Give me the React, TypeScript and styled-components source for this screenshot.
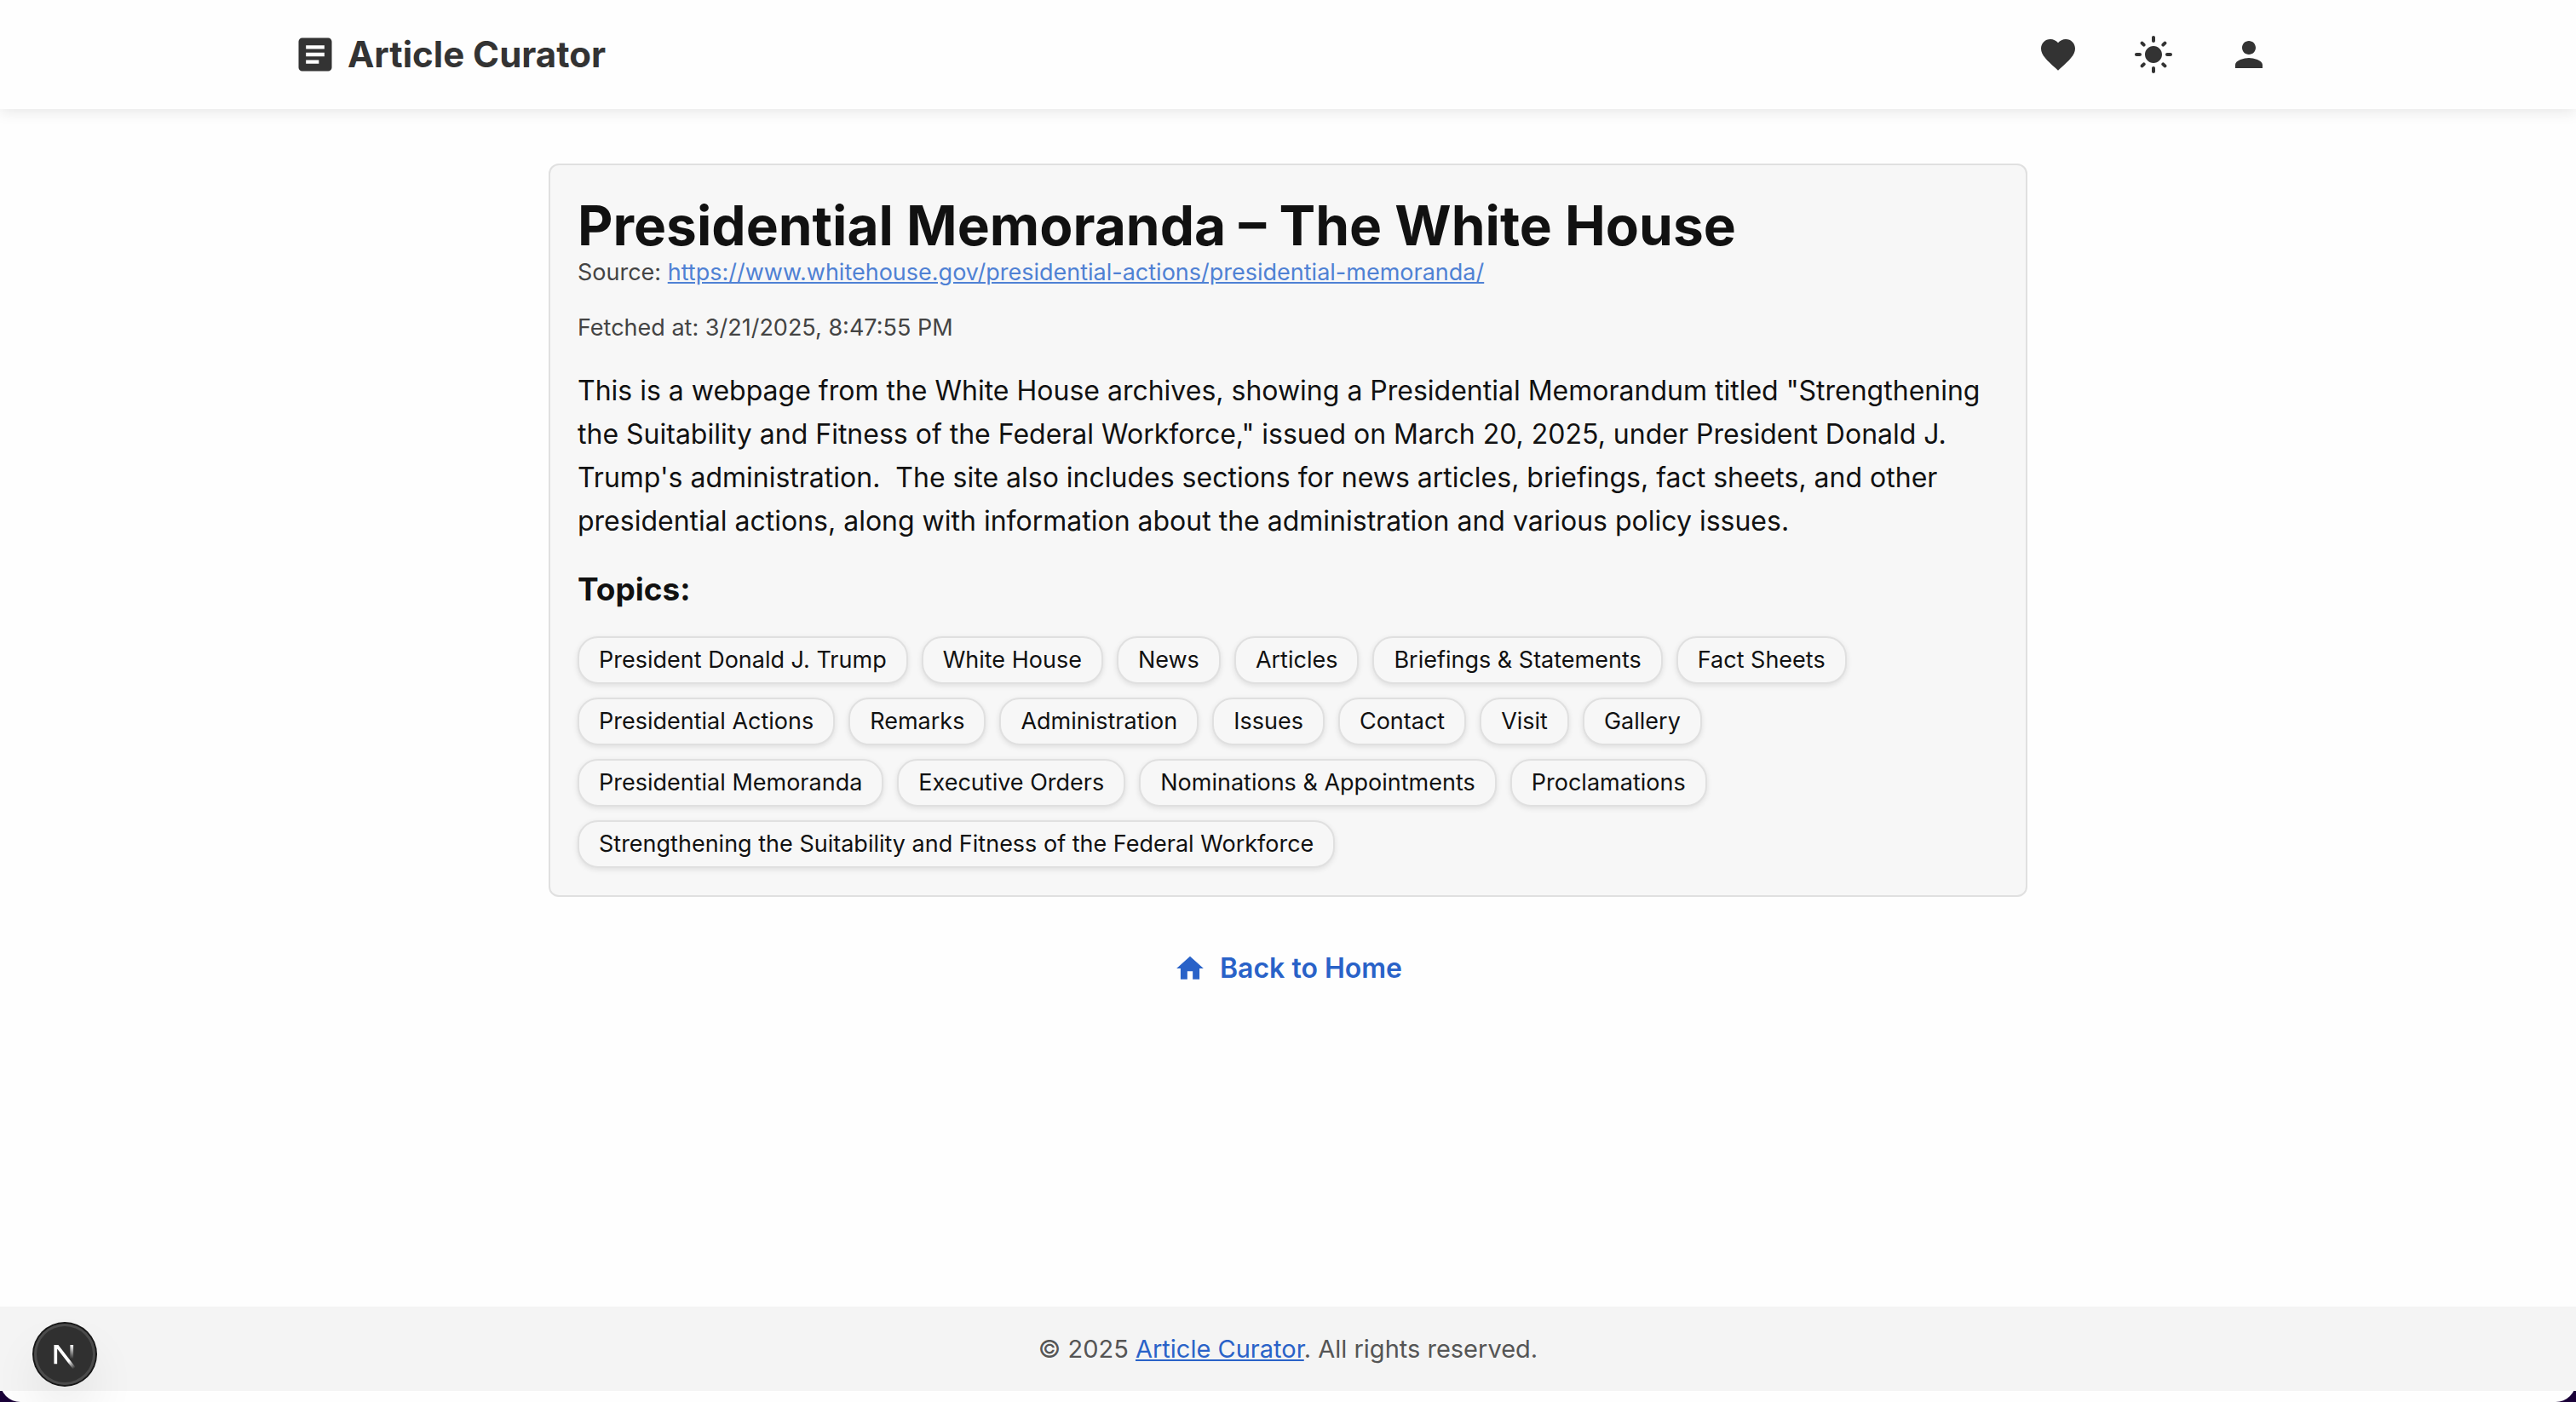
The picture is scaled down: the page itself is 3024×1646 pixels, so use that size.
import React from "react";
import styled, { createGlobalStyle } from "styled-components";
import { MdArticle, MdFavorite, MdHome, MdLightMode, MdPerson } from "react-icons/md";

const GlobalStyle = createGlobalStyle`
  *, *::before, *::after { box-sizing: border-box; }
  body {
    margin: 0;
    background: #1a0138;
    color: #111;
    font-family: Inter, "Liberation Sans", sans-serif;
    font-size: 32px;
    line-height: 1.2;
  }
  h1, h2, p, ul { margin: 0; padding: 0; }
`;

const Page = styled.div`
  display: flex;
  flex-direction: column;
  min-height: 100vh;
  padding-bottom: 13px;
  background: #fefefe;
  border-radius: 0 0 24px 24px;
`;

const Header = styled.header`
  background: #fefefe;
  box-shadow: 0 4px 16px rgba(0, 0, 0, 0.09);
`;

const HeaderInner = styled.div`
  display: flex;
  align-items: center;
  justify-content: space-between;
  max-width: 2400px;
  height: 128px;
  margin: 0 auto;
  padding: 0 32px;
`;

const Brand = styled.a`
  display: flex;
  align-items: center;
  gap: 12px;
  color: #333;
  font-size: 42px;
  font-weight: 700;
  text-decoration: none;

  svg { width: 52px; height: 52px; }
`;

const Nav = styled.nav`
  display: flex;
  gap: 32px;
`;

const IconButton = styled.button`
  display: flex;
  padding: 16px;
  border: 0;
  background: none;
  color: #333;
  cursor: pointer;

  svg { width: 48px; height: 48px; }
`;

const Main = styled.main`
  flex: 1;
  width: 100%;
  max-width: 1800px;
  margin: 0 auto;
  padding: 64px 32px;
`;

const Card = styled.article`
  display: flex;
  flex-direction: column;
  gap: 32px;
  padding: 32px;
  border: 2px solid #e0e0e0;
  border-radius: 12px;
  background: #f7f7f7;
`;

const Title = styled.h1`
  font-size: 64px;
  font-weight: 700;
  line-height: 77px;
`;

const Meta = styled.p`
  color: #444;
  font-size: 27px;
  line-height: 33px;
`;

const SourceLink = styled.a`
  color: #4f81d4;
`;

const Summary = styled.p`
  line-height: 51px;
  white-space: pre-wrap;
`;

const TopicsTitle = styled.h2`
  font-size: 37px;
  font-weight: 700;
  line-height: 46px;
`;

const Topics = styled.ul`
  display: flex;
  flex-wrap: wrap;
  gap: 16px;
  list-style: none;
`;

const Topic = styled.li`
  padding: 10px 23px;
  border: 2px solid #e0e0e0;
  border-radius: 24px;
  background: #f7f7f7;
  box-shadow: 0 2px 6px rgba(0, 0, 0, 0.1);
  font-size: 27px;
  line-height: 32px;
`;

const BackRow = styled.div`
  display: flex;
  justify-content: center;
  margin-top: 64px;
`;

const BackLink = styled.a`
  display: flex;
  align-items: center;
  gap: 16px;
  color: #2962c8;
  font-weight: 600;
  line-height: 40px;
  text-decoration: none;

  svg { width: 38px; height: 38px; }
`;

const Footer = styled.footer`
  padding: 32px;
  background: #f4f4f4;
  color: #555;
  font-size: 29px;
  line-height: 35px;
  text-align: center;

  a { color: #2962c8; }
`;

const DevBadge = styled.button`
  position: fixed;
  left: 40px;
  bottom: 20px;
  display: flex;
  align-items: center;
  justify-content: center;
  width: 72px;
  height: 72px;
  padding: 0;
  border: 0;
  border-radius: 50%;
  background: #303030;
  box-shadow:
    0 0 0 2px #171717,
    inset 0 0 0 3px #4b4b4b,
    0 32px 64px -16px rgba(0, 0, 0, 0.24);
  cursor: pointer;

  svg { flex: none; }
`;

const topics = [
  "President Donald J. Trump",
  "White House",
  "News",
  "Articles",
  "Briefings & Statements",
  "Fact Sheets",
  "Presidential Actions",
  "Remarks",
  "Administration",
  "Issues",
  "Contact",
  "Visit",
  "Gallery",
  "Presidential Memoranda",
  "Executive Orders",
  "Nominations & Appointments",
  "Proclamations",
  "Strengthening the Suitability and Fitness of the Federal Workforce",
];

const summary =
  'This is a webpage from the White House archives, showing a Presidential Memorandum titled "Strengthening the Suitability and Fitness of the Federal Workforce," issued on March 20, 2025, under President Donald J. Trump\'s administration.  The site also includes sections for news articles, briefings, fact sheets, and other presidential actions, along with information about the administration and various policy issues.';

const sourceUrl = "https://www.whitehouse.gov/presidential-actions/presidential-memoranda/";

function NextMark() {
  return (
    <svg width="80" height="80" viewBox="0 0 40 40" fill="none" aria-hidden="true">
      <defs>
        <linearGradient id="diagonal" gradientUnits="userSpaceOnUse" x1="9.95555" y1="11.1226" x2="15.4778" y2="17.9671">
          <stop stopColor="#fff" />
          <stop offset="0.604072" stopColor="#fff" stopOpacity="0" />
          <stop offset="1" stopColor="#fff" stopOpacity="0" />
        </linearGradient>
        <linearGradient id="stem" gradientUnits="userSpaceOnUse" x1="11.8222" y1="1.40039" x2="11.791" y2="9.62542">
          <stop stopColor="#fff" />
          <stop offset="1" stopColor="#fff" stopOpacity="0" />
        </linearGradient>
        <mask id="top" maskUnits="userSpaceOnUse" x="0" y="0" width="20" height="20">
          <rect width="20" height="20" fill="#fff" />
          <rect width="5" height="1.5" fill="#000" />
        </mask>
      </defs>
      <g transform="translate(12.3 13)">
        <path d="M13.3 15.2 L2.34 1 V12.6" stroke="url(#diagonal)" strokeWidth="1.86" mask="url(#top)" />
        <path d="M11.825 1.5 V13.1" stroke="url(#stem)" strokeWidth="1.86" />
      </g>
    </svg>
  );
}

export default function App() {
  return (
    <>
      <GlobalStyle />
      <Page>
        <Header>
          <HeaderInner>
            <Brand href="#">
              <MdArticle />
              Article Curator
            </Brand>
            <Nav>
              <IconButton type="button" aria-label="Favorites"><MdFavorite /></IconButton>
              <IconButton type="button" aria-label="Toggle theme"><MdLightMode /></IconButton>
              <IconButton type="button" aria-label="Account"><MdPerson /></IconButton>
            </Nav>
          </HeaderInner>
        </Header>
        <Main>
          <Card>
            <div>
              <Title>Presidential Memoranda – The White House</Title>
              <Meta>
                Source: <SourceLink href={sourceUrl}>{sourceUrl}</SourceLink>
              </Meta>
            </div>
            <Meta>Fetched at: 3/21/2025, 8:47:55 PM</Meta>
            <Summary>{summary}</Summary>
            <TopicsTitle>Topics:</TopicsTitle>
            <Topics>
              {topics.map((topic) => (
                <Topic key={topic}>{topic}</Topic>
              ))}
            </Topics>
          </Card>
          <BackRow>
            <BackLink href="#">
              <MdHome />
              Back to Home
            </BackLink>
          </BackRow>
        </Main>
        <Footer>
          © 2025 <a href="#">Article Curator</a>. All rights reserved.
        </Footer>
      </Page>
      <DevBadge type="button" aria-label="Open developer tools">
        <NextMark />
      </DevBadge>
    </>
  );
}
